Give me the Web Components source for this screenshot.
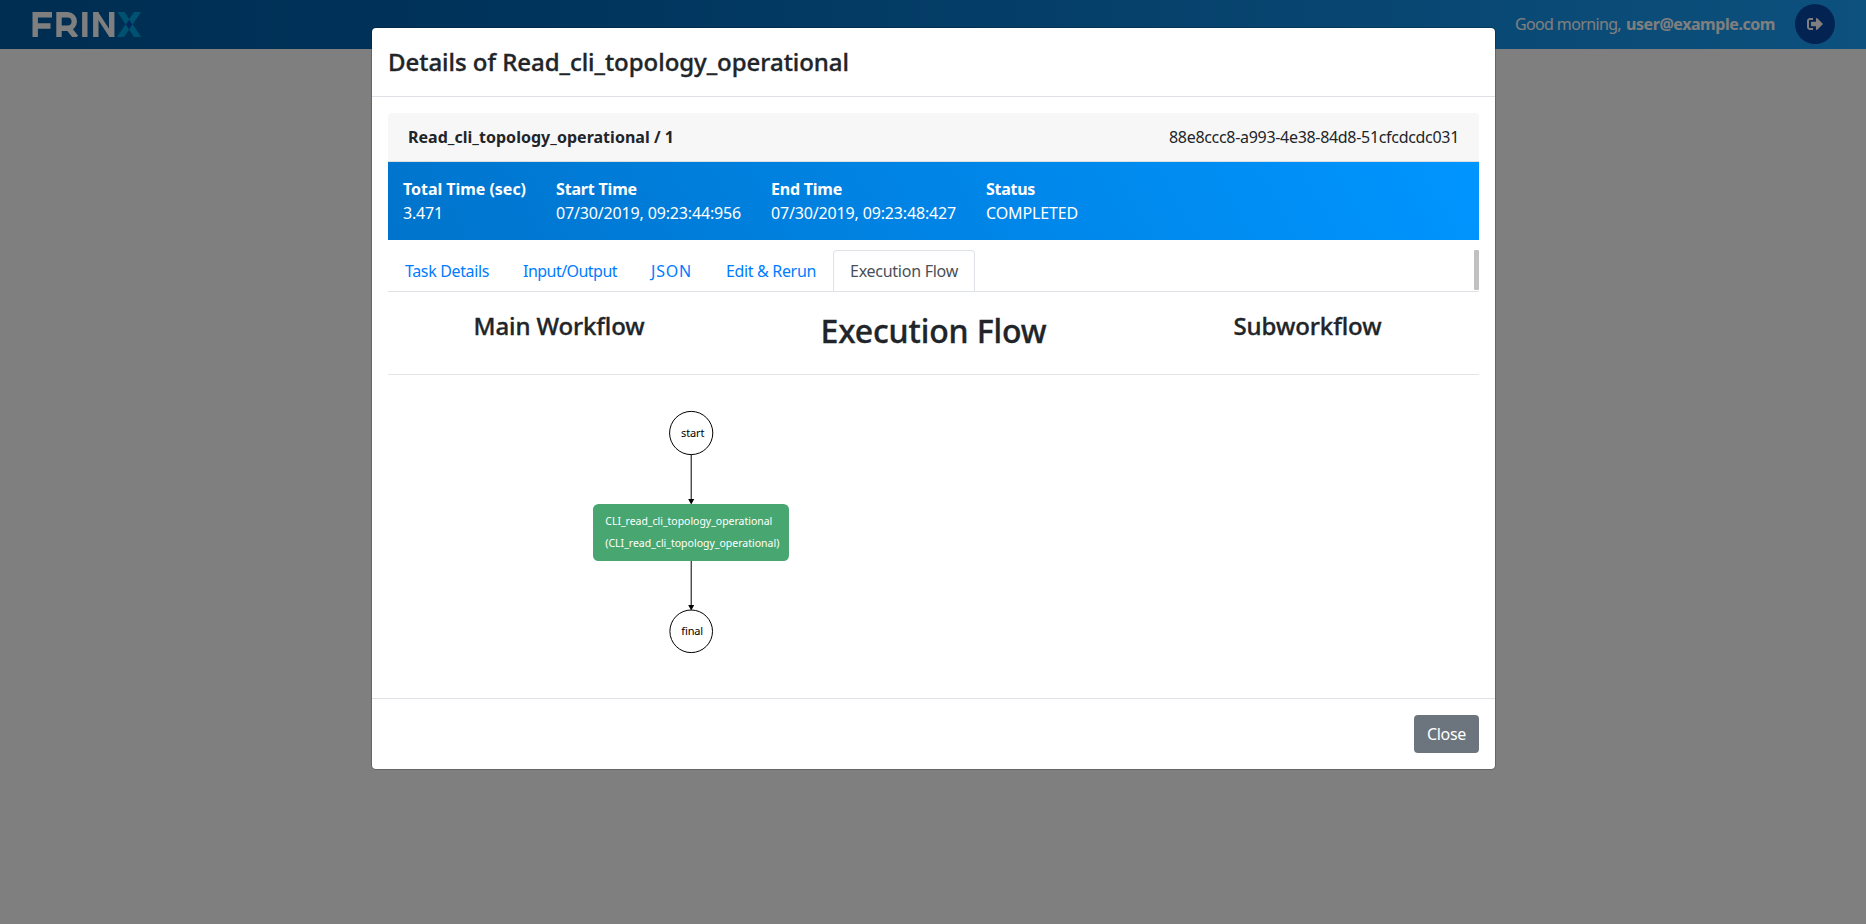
<!DOCTYPE html>
<html lang="en">
<head>
<meta charset="utf-8">
<title>Workflow details</title>
<style>
body { margin: 0; font: 16px/24px "Noto Sans", sans-serif; color: #212529; background: #fff; height: 924px; overflow: hidden; }
</style>
</head>
<body>
<workflow-app></workflow-app>
<script>
const define = (name, html, init) => {
  const template = document.createElement('template');
  template.innerHTML = html;
  customElements.define(name, class extends HTMLElement {
    connectedCallback() {
      if (this.shadowRoot) return;
      this.attachShadow({ mode: 'open' }).append(template.content.cloneNode(true));
      if (init) init(this, this.shadowRoot);
    }
  });
};

// One line of text tracked to a given width.
define('fit-text', `<style>:host{display:inline-block;white-space:pre}</style><span><slot></slot></span>`,
  (el, root) => {
    const w = +el.getAttribute('w'), span = root.querySelector('span');
    const natural = span.getBoundingClientRect().width;
    span.style.letterSpacing = (w - natural) / el.textContent.length + 'px';
    el.style.width = w + 'px';
  });

define('frinx-logo', `<style>:host{display:block;width:110px;height:25px}svg{display:block}</style>
<svg width="110" height="25" viewBox="0 0 110 25" fill="none" stroke="#fff" stroke-width="5.400">
<path d="M3.200 25V2.700H20M3.200 14H18.500"/>
<path d="M27 25V2.700h8.500a5.500 5.500 0 0 1 0 13.500H27M36.500 16l7.500 9.500"/>
<path d="M52.800 0v25"/>
<path d="M63.800 25V0M79.700 25V0"/><path d="M61.100 0h5L82.400 25h-5z" fill="#fff" stroke="none"/>
<path d="M85.500 0h7L109 25h-7zM102 0h7L92 25h-7z" fill="#00a5e3" stroke="none"/>
<path d="M97.100 7.500l3.200 5-3.200 5-3.200-5z" fill="#0050b5" stroke="none"/></svg>`);

define('app-header', `<style>
:host{display:flex;height:49px;box-sizing:border-box;align-items:center;justify-content:space-between;padding:0 31px 0 32px;background:linear-gradient(to right,#005ba4,#0068b8 28%,#1aa2fc 100%);color:#fff}
.user{display:flex;align-items:center;gap:20px;margin-top:-1px}
.out{width:40px;height:40px;border-radius:50%;background:#0747a6;display:grid;place-items:center}
.hi{display:flex;gap:5px}
</style><frinx-logo></frinx-logo>
<div class="user"><div class="hi"><fit-text w="106">Good morning,</fit-text><b><fit-text w="149">user@example.com</fit-text></b></div>
<div class="out"><svg width="16" height="16" viewBox="0 0 512 512" fill="#fff"><path d="M497 273L329 441c-15 15-41 4.500-41-17v-96H152c-13.300 0-24-10.700-24-24v-96c0-13.300 10.700-24 24-24h136V88c0-21.400 25.900-32 41-17l168 168c9.300 9.400 9.300 24.600 0 34zM192 436v-40c0-6.600-5.400-12-12-12H96c-17.700 0-32-14.300-32-32V160c0-17.700 14.300-32 32-32h84c6.600 0 12-5.400 12-12V76c0-6.600-5.400-12-12-12H96c-53 0-96 43-96 96v192c0 53 43 96 96 96h84c6.600 0 12-5.400 12-12z"/></svg></div></div>`);

define('stat-item', `<style>:host{display:block}b{display:block;height:24px}</style><b><slot name="label"></slot></b><slot></slot>`);

define('summary-card', `<style>
:host{display:block}
.head{display:flex;justify-content:space-between;padding:12px 20px;height:24px;background:#f7f7f7;border-bottom:1px solid #dfdfdf;border-radius:4px 4px 0 0}
.stats{display:flex;gap:30px;box-sizing:border-box;height:78px;padding:15px;color:#fff;background:linear-gradient(-120deg,#0095ff 0%,#0074cc 100%)}
</style>
<div class="head"><b><fit-text w="266">Read_cli_topology_operational / 1</fit-text></b><fit-text w="290">88e8ccc8-a993-4e38-84d8-51cfcdcdc031</fit-text></div>
<div class="stats">
<stat-item><fit-text slot="label" w="123">Total Time (sec)</fit-text><fit-text w="40">3.471</fit-text></stat-item>
<stat-item><fit-text slot="label" w="81">Start Time</fit-text><fit-text w="185">07/30/2019, 09:23:44:956</fit-text></stat-item>
<stat-item><fit-text slot="label" w="71">End Time</fit-text><fit-text w="185">07/30/2019, 09:23:48:427</fit-text></stat-item>
<stat-item><fit-text slot="label" w="49">Status</fit-text><fit-text w="92">COMPLETED</fit-text></stat-item>
</div>`);

define('nav-tab', `<style>
:host{display:block;box-sizing:border-box;height:41px;padding:8px 16px;border:1px solid transparent;border-bottom:0;color:#007bff}
:host([active]){color:#495057;background:#fff;border-color:#dee2e6;border-radius:4px 4px 0 0}
</style><slot></slot>`);

define('tab-bar', `<style>
:host{display:flex;justify-content:space-between;margin-top:10px;height:41px;border-bottom:1px solid #dee2e6}
.tabs{display:flex}
.thumb{width:5px;height:40px;background:#c1c1c1;border-radius:1px}
</style><div class="tabs">
<nav-tab><fit-text w="84">Task Details</fit-text></nav-tab><nav-tab><fit-text w="94">Input/Output</fit-text></nav-tab><nav-tab><fit-text w="41">JSON</fit-text></nav-tab><nav-tab><fit-text w="90">Edit &amp; Rerun</fit-text></nav-tab><nav-tab active><fit-text w="108">Execution Flow</fit-text></nav-tab>
</div><div class="thumb"></div>`);

define('flow-headings', `<style>
:host{display:grid;grid-template-columns:342px 407px 341px;justify-items:center;box-sizing:border-box;height:83px;padding-top:19px;border-bottom:1px solid #e5e5e5}
h4,h2{margin:0;font-weight:500;font-size:24px;line-height:29px;-webkit-text-stroke:.35px}
h2{font-size:32px;line-height:40px}
</style><h4><fit-text w="171">Main Workflow</fit-text></h4><h2><fit-text w="226">Execution Flow</fit-text></h2><h4><fit-text w="148">Subworkflow</fit-text></h4>`);

define('flow-diagram', `<style>:host{display:block;height:323px}svg{display:block}text{font:11px "Noto Sans",sans-serif}</style>
<svg width="600" height="323" viewBox="388 375 600 323">
<g fill="#fff" stroke="#000"><circle cx="691.200" cy="433" r="21.600"/><circle cx="691.200" cy="631.300" r="21.300"/><path d="M691.200 454.600V500M691.200 561V606"/></g>
<path d="M688.200 499h6l-3 5.500zM688.200 605h6l-3 5.500z"/>
<rect x="593" y="504" width="196" height="57" rx="5.500" fill="#48a770"/>
<text x="681" y="437" textLength="23.500">start</text><text x="681" y="635" textLength="22">final</text>
<g fill="#fff"><text x="605.300" y="525" textLength="167" lengthAdjust="spacingAndGlyphs">CLI_read_cli_topology_operational</text><text x="605.300" y="547" textLength="174" lengthAdjust="spacingAndGlyphs">(CLI_read_cli_topology_operational)</text></g>
</svg>`);

define('details-modal', `<style>
:host{display:block;box-sizing:border-box;width:1125px;margin:27px 0 0 371px;background:#fff;background-clip:padding-box;border:1px solid rgba(0,0,0,.2);border-radius:5px}
header{height:36px;padding:16px;border-bottom:1px solid #dee2e6;font-size:24px;line-height:36px;font-weight:500;-webkit-text-stroke:.35px}
main{padding:16px 16px 0}
footer{display:flex;justify-content:flex-end;padding:16px;border-top:1px solid #dee2e6}
button{box-sizing:border-box;width:65px;height:38px;padding:0;border:0;border-radius:4px;background:#6c757d;color:#fff;font:inherit}
</style>
<header><fit-text w="461">Details of Read_cli_topology_operational</fit-text></header>
<main><summary-card></summary-card><tab-bar></tab-bar><flow-headings></flow-headings><flow-diagram></flow-diagram></main>
<footer><button><fit-text w="39">Close</fit-text></button></footer>`);

define('workflow-app', `<style>
:host{display:block;position:relative;height:924px}
.overlay{position:absolute;inset:0;background:rgba(0,0,0,.5);display:flow-root}
</style><app-header></app-header><div class="overlay"><details-modal></details-modal></div>`);
</script>
</body>
</html>
